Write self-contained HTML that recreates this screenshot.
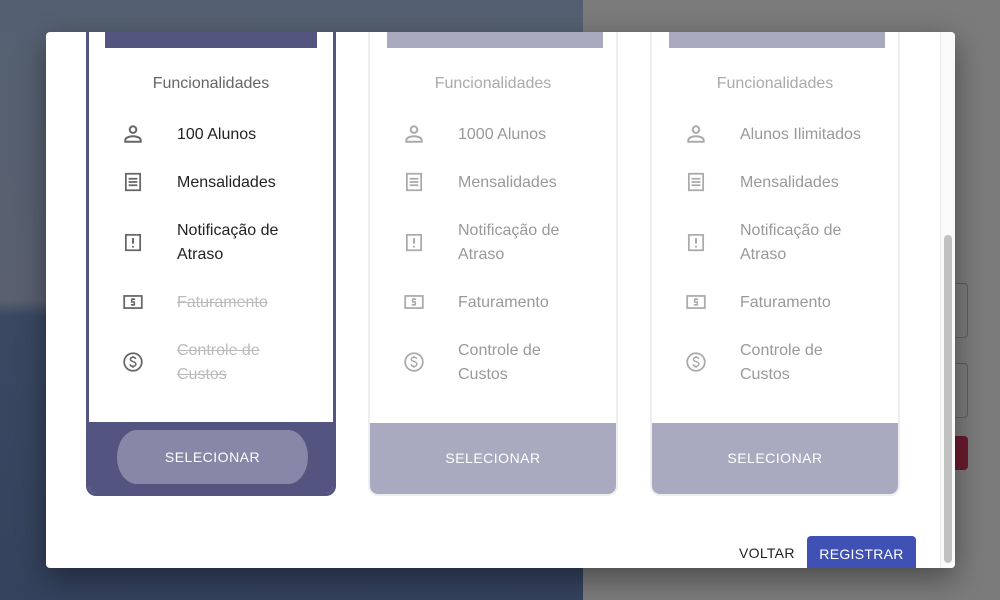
<!DOCTYPE html>
<html><head><meta charset="utf-8"><style>
*{margin:0;padding:0;box-sizing:border-box}
body{width:1000px;height:600px;overflow:hidden;position:relative;font-family:"Liberation Sans",sans-serif;background:#7a7a7a}
.abs{position:absolute}
.left{left:0;top:0;width:583px;height:600px;background:linear-gradient(#546071 0,#5a6070 300px,#3a4862 316px,#34425d 600px)}
.right{left:583px;top:0;width:417px;height:600px;background:#7b7b7b}
.modal{left:46px;top:32px;width:909px;height:536px;background:#fff;border-radius:4px;overflow:hidden;box-shadow:0 10px 30px rgba(0,0,0,.4)}
.card{position:absolute;top:-20px;width:250px;height:484px;border-radius:10px;overflow:hidden;background:#fff}
.c1{left:40px;border:3px solid #535580;border-top:none}
.c2{left:322px;border:2px solid #eee;border-top:none}
.c3{left:604px;border:2px solid #eee;border-top:none}
.bar{position:absolute;top:0;height:36px}
.title{position:absolute;top:62px;width:100%;text-align:center;font-size:16px;line-height:20px}
.row{position:absolute;left:0;width:100%;font-size:16px;line-height:24px}
.row svg{position:absolute;left:33px;width:22px;height:22px}
.row span{position:absolute;left:88px;width:122px;top:0}
.foot{position:absolute;left:0;bottom:0;width:100%;height:71px;text-align:center;color:#fff;font-size:14px;letter-spacing:.5px;line-height:71px}
.pill{position:absolute;left:28px;top:8px;width:191px;height:54px;background:#8788a8;border-radius:20px/27px;line-height:54px}
.dim{color:#999}
s{color:#bbb}
</style></head><body>
<div class="abs left"></div>
<div class="abs right"></div>
<div class="abs" style="left:945px;top:283px;width:23px;height:55px;border:1px solid #5e5e5e;border-radius:4px"></div>
<div class="abs" style="left:945px;top:363px;width:23px;height:55px;border:1px solid #5e5e5e;border-radius:4px"></div>
<div class="abs" style="left:945px;top:436px;width:23px;height:34px;background:#6a1a2e;border-radius:4px"></div>

<svg width="0" height="0" style="position:absolute">
<defs>
<g id="i1" fill="none" stroke-width="1.8"><circle cx="10" cy="6" r="3"/><path d="M3 17v-1.5c0-2 3.5-3.5 7-3.5s7 1.5 7 3.5V17z"/></g>
<g id="i2" fill="none" stroke-width="1.6"><rect x="3.5" y="2.5" width="13" height="15"/><path d="M6 7h8M6 10h8M6 13h8"/></g>
<g id="i3" fill="none" stroke-width="1.6"><path d="M7 3.5H3.5v14h13v-14H13"/><path d="M7 3.5h6" /><path d="M10 6.5v5M10 13.5v1.5" stroke-width="1.8"/></g>
<g id="i4" fill="none" stroke-width="1.6"><rect x="2" y="4.5" width="16" height="11"/><path d="M12 7.5H8.8v2.5h2.4v2.5H8M10 6.5v1M10 12.5v1" stroke-width="1.4"/></g>
<g id="i5" fill="none" stroke-width="1.6"><circle cx="10" cy="10" r="8"/><path d="M12.5 7.3c-.3-1-1.3-1.6-2.5-1.6-1.4 0-2.4.8-2.4 1.9 0 2.6 5 1.4 5 4.3 0 1.2-1.1 2-2.6 2-1.3 0-2.4-.7-2.6-1.8M10 4.5v1.3M10 14v1.3" stroke-width="1.4"/></g>
</defs></svg>

<div class="abs modal">
<div class="card c1">
 <div class="bar" style="left:16px;width:212px;background:#535580"></div>
 <div class="title" style="color:#666">Funcionalidades</div>
 <div class="row" style="top:111px;color:#222"><svg viewBox="0 0 20 20" style="top:0px" stroke="#666"><use href="#i1"/></svg><span>100 Alunos</span></div>
 <div class="row" style="top:159px;color:#222"><svg viewBox="0 0 20 20" style="top:0px" stroke="#666"><use href="#i2"/></svg><span>Mensalidades</span></div>
 <div class="row" style="top:207px;color:#222"><svg viewBox="0 0 20 20" style="top:12px" stroke="#666"><use href="#i3"/></svg><span>Notificação de Atraso</span></div>
 <div class="row" style="top:279px"><svg viewBox="0 0 20 20" style="top:0px" stroke="#666"><use href="#i4"/></svg><span><s>Faturamento</s></span></div>
 <div class="row" style="top:327px"><svg viewBox="0 0 20 20" style="top:12px" stroke="#666"><use href="#i5"/></svg><span><s>Controle de Custos</s></span></div>
 <div class="foot" style="background:#535580"><div class="pill">SELECIONAR</div></div>
</div>

<div class="card c2">
 <div class="bar" style="left:17px;width:216px;background:#a9aac0"></div>
 <div class="title" style="color:#aaa">Funcionalidades</div>
 <div class="row dim" style="top:111px"><svg viewBox="0 0 20 20" style="top:0px" stroke="#aaa"><use href="#i1"/></svg><span>1000 Alunos</span></div>
 <div class="row dim" style="top:159px"><svg viewBox="0 0 20 20" style="top:0px" stroke="#aaa"><use href="#i2"/></svg><span>Mensalidades</span></div>
 <div class="row dim" style="top:207px"><svg viewBox="0 0 20 20" style="top:12px" stroke="#aaa"><use href="#i3"/></svg><span>Notificação de Atraso</span></div>
 <div class="row dim" style="top:279px"><svg viewBox="0 0 20 20" style="top:0px" stroke="#aaa"><use href="#i4"/></svg><span>Faturamento</span></div>
 <div class="row dim" style="top:327px"><svg viewBox="0 0 20 20" style="top:12px" stroke="#aaa"><use href="#i5"/></svg><span>Controle de Custos</span></div>
 <div class="foot" style="background:#a9aac0">SELECIONAR</div>
</div>

<div class="card c3">
 <div class="bar" style="left:17px;width:216px;background:#a9aac0"></div>
 <div class="title" style="color:#aaa">Funcionalidades</div>
 <div class="row dim" style="top:111px"><svg viewBox="0 0 20 20" style="top:0px" stroke="#aaa"><use href="#i1"/></svg><span style="width:150px">Alunos Ilimitados</span></div>
 <div class="row dim" style="top:159px"><svg viewBox="0 0 20 20" style="top:0px" stroke="#aaa"><use href="#i2"/></svg><span>Mensalidades</span></div>
 <div class="row dim" style="top:207px"><svg viewBox="0 0 20 20" style="top:12px" stroke="#aaa"><use href="#i3"/></svg><span>Notificação de Atraso</span></div>
 <div class="row dim" style="top:279px"><svg viewBox="0 0 20 20" style="top:0px" stroke="#aaa"><use href="#i4"/></svg><span>Faturamento</span></div>
 <div class="row dim" style="top:327px"><svg viewBox="0 0 20 20" style="top:12px" stroke="#aaa"><use href="#i5"/></svg><span>Controle de Custos</span></div>
 <div class="foot" style="background:#a9aac0">SELECIONAR</div>
</div>

<div class="abs" style="left:693px;top:513px;font-size:14px;color:#222;letter-spacing:.3px">VOLTAR</div>
<div class="abs" style="left:761px;top:504px;width:109px;height:40px;background:#3f51b5;border-radius:4px;color:#fff;font-size:14px;letter-spacing:.3px;text-align:center;line-height:36px">REGISTRAR</div>

<div class="abs" style="left:894px;top:0;width:15px;height:536px;background:#fafafa;border-left:1px solid #eee"></div>
<div class="abs" style="left:898px;top:203px;width:8px;height:328px;background:#c1c1c1;border-radius:4px"></div>
</div>
</body></html>
